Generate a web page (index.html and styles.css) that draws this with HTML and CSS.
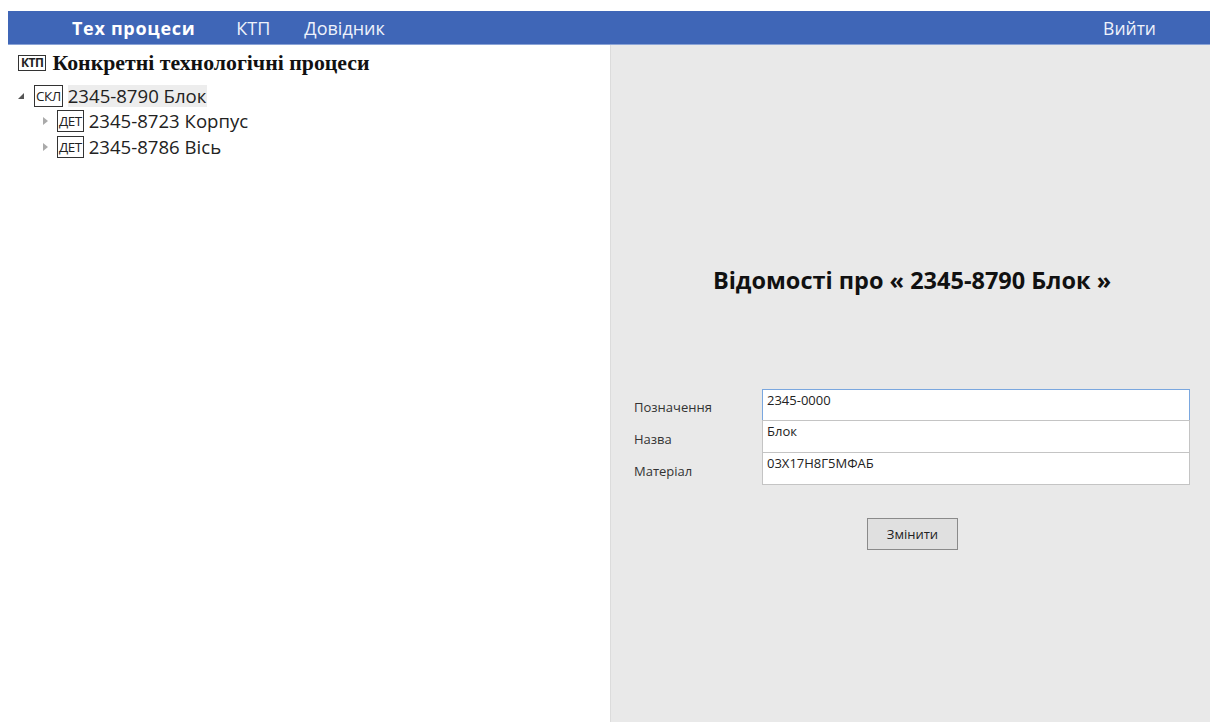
FILE: index.html
```html
<!DOCTYPE html>
<html lang="uk">
<head>
<meta charset="utf-8">
<title>Тех процеси</title>
<link rel="stylesheet" href="styles.css">
</head>
<body>
<header class="topbar">
  <nav class="menu">
    <a class="menu-item active">Тех процеси</a>
    <a class="menu-item">КТП</a>
    <a class="menu-item">Довідник</a>
  </nav>
  <a class="menu-item logout">Вийти</a>
</header>
<main class="workspace">
  <section class="tree-pane">
    <div class="tree-title"><span class="tag tag-small">КТП</span>Конкретні технологічні процеси</div>
    <ul class="tree">
      <li>
        <div class="node selected"><span class="arrow open"></span><span class="tag">СКЛ</span><span class="node-text">2345-8790 Блок</span></div>
        <ul class="tree child">
          <li><div class="node"><span class="arrow"></span><span class="tag">ДЕТ</span><span class="node-text">2345-8723 Корпус</span></div></li>
          <li><div class="node"><span class="arrow"></span><span class="tag">ДЕТ</span><span class="node-text">2345-8786 Вісь</span></div></li>
        </ul>
      </li>
    </ul>
  </section>
  <section class="details">
    <h1 class="details-title">Відомості про « 2345-8790 Блок »</h1>
    <form class="form">
      <label class="field-label">Позначення</label>
      <div class="field focused">2345-0000</div>
      <label class="field-label">Назва</label>
      <div class="field">Блок</div>
      <label class="field-label">Матеріал</label>
      <div class="field">03Х17Н8Г5МФАБ</div>
    </form>
    <div class="actions"><button class="btn" type="button">Змінити</button></div>
  </section>
</main>
</body>
</html>
```
FILE: styles.css
```css
html, body {
  margin: 0;
  padding: 0;
  height: 100%;
  background: #ffffff;
  font-family: "Open Sans", "Noto Sans", sans-serif;
  color: #1a1a1a;
  overflow: hidden;
}

body {
  padding-top: 11px;
  box-sizing: border-box;
  display: flex;
  flex-direction: column;
}

.topbar {
  margin-left: 8px;
  height: 34px;
  background: #3f66b7;
  border-bottom: 1px solid #8aa3d6;
  display: flex;
  align-items: center;
  justify-content: space-between;
  box-sizing: border-box;
}

.menu {
  display: flex;
  align-items: center;
  padding-left: 64px;
  gap: 34px;
}

.menu-item {
  color: #eef2fb;
  font-size: 18px;
  line-height: 20px;
  cursor: pointer;
}

.menu-item.active {
  font-weight: 700;
  color: #ffffff;
  letter-spacing: 0.7px;
  margin-right: 7px;
}

.logout {
  margin-right: 54px;
  font-size: 17.5px;
}

.workspace {
  flex: 1;
  display: flex;
  min-height: 0;
}

.tree-pane {
  width: 610px;
  flex: none;
  padding: 7px 0 0 18px;
  box-sizing: border-box;
}

.tree-title {
  display: flex;
  align-items: center;
  font-family: "Liberation Serif", serif;
  font-weight: 700;
  font-size: 21.8px;
  height: 22px;
  color: #111;
}

.tag {
  display: inline-block;
  border: 1px solid #333;
  font-family: "Open Sans", "Noto Sans", sans-serif;
  font-size: 13.5px;
  line-height: 20px;
  padding: 0 1px;
  margin-right: 5px;
  color: #222;
  letter-spacing: -0.5px;
}

.tag-small {
  font-size: 12px;
  line-height: 14px;
  margin-right: 6px;
  padding: 0 2px;
}

.tree {
  list-style: none;
  margin: 0;
  padding: 0;
}

.tree > li {
  margin: 0;
}

.tree:not(.child) {
  margin-top: 9px;
}

.child {
  padding-left: 23px;
}

.node {
  display: flex;
  align-items: center;
  height: 25.5px;
}

.arrow {
  width: 16px;
  height: 12px;
  flex: none;
  position: relative;
}

.arrow::before {
  content: "";
  position: absolute;
  left: 2px;
  top: 2px;
  border-style: solid;
  border-width: 4px 0 4px 5px;
  border-color: transparent transparent transparent #aaaaaa;
}

.arrow.open::before {
  left: 0;
  top: 3px;
  border-width: 0 0 6px 6px;
  border-color: transparent transparent #555 transparent;
}

.node-text {
  font-size: 18.6px;
  line-height: 22px;
  color: #222;
  padding-right: 1px;
}

.selected .node-text {
  background: #ededed;
}

.details {
  flex: 1;
  background: #e9e9e9;
  border-left: 1px solid #dcdcdc;
  display: flex;
  flex-direction: column;
  padding: 0 20px 0 23px;
}

.details-title {
  margin: 220px 0 0;
  text-align: center;
  font-size: 23.5px;
  font-weight: 700;
  color: #111;
  line-height: 30px;
}

.form {
  margin-top: 94px;
  display: grid;
  grid-template-columns: 128px 1fr;
  grid-auto-rows: 32px;
  align-items: stretch;
}

.field-label {
  font-size: 13px;
  color: #333;
  align-self: center;
  padding-top: 3px;
}

.field {
  background: #fff;
  border: 1px solid #c4c4c4;
  font-size: 13px;
  line-height: 18px;
  padding: 1px 4px;
  color: #222;
  margin-top: -1px;
}

.field.focused {
  border-color: #7aa7df;
  margin-top: 0;
}

.actions {
  display: flex;
  justify-content: center;
  margin-top: 33px;
  padding-left: 1px;
}

.btn {
  width: 91px;
  height: 32px;
  background: #e0e0e0;
  border: 1px solid #8a8a8a;
  font-family: "Open Sans", "Noto Sans", sans-serif;
  font-size: 13px;
  color: #222;
}
```
